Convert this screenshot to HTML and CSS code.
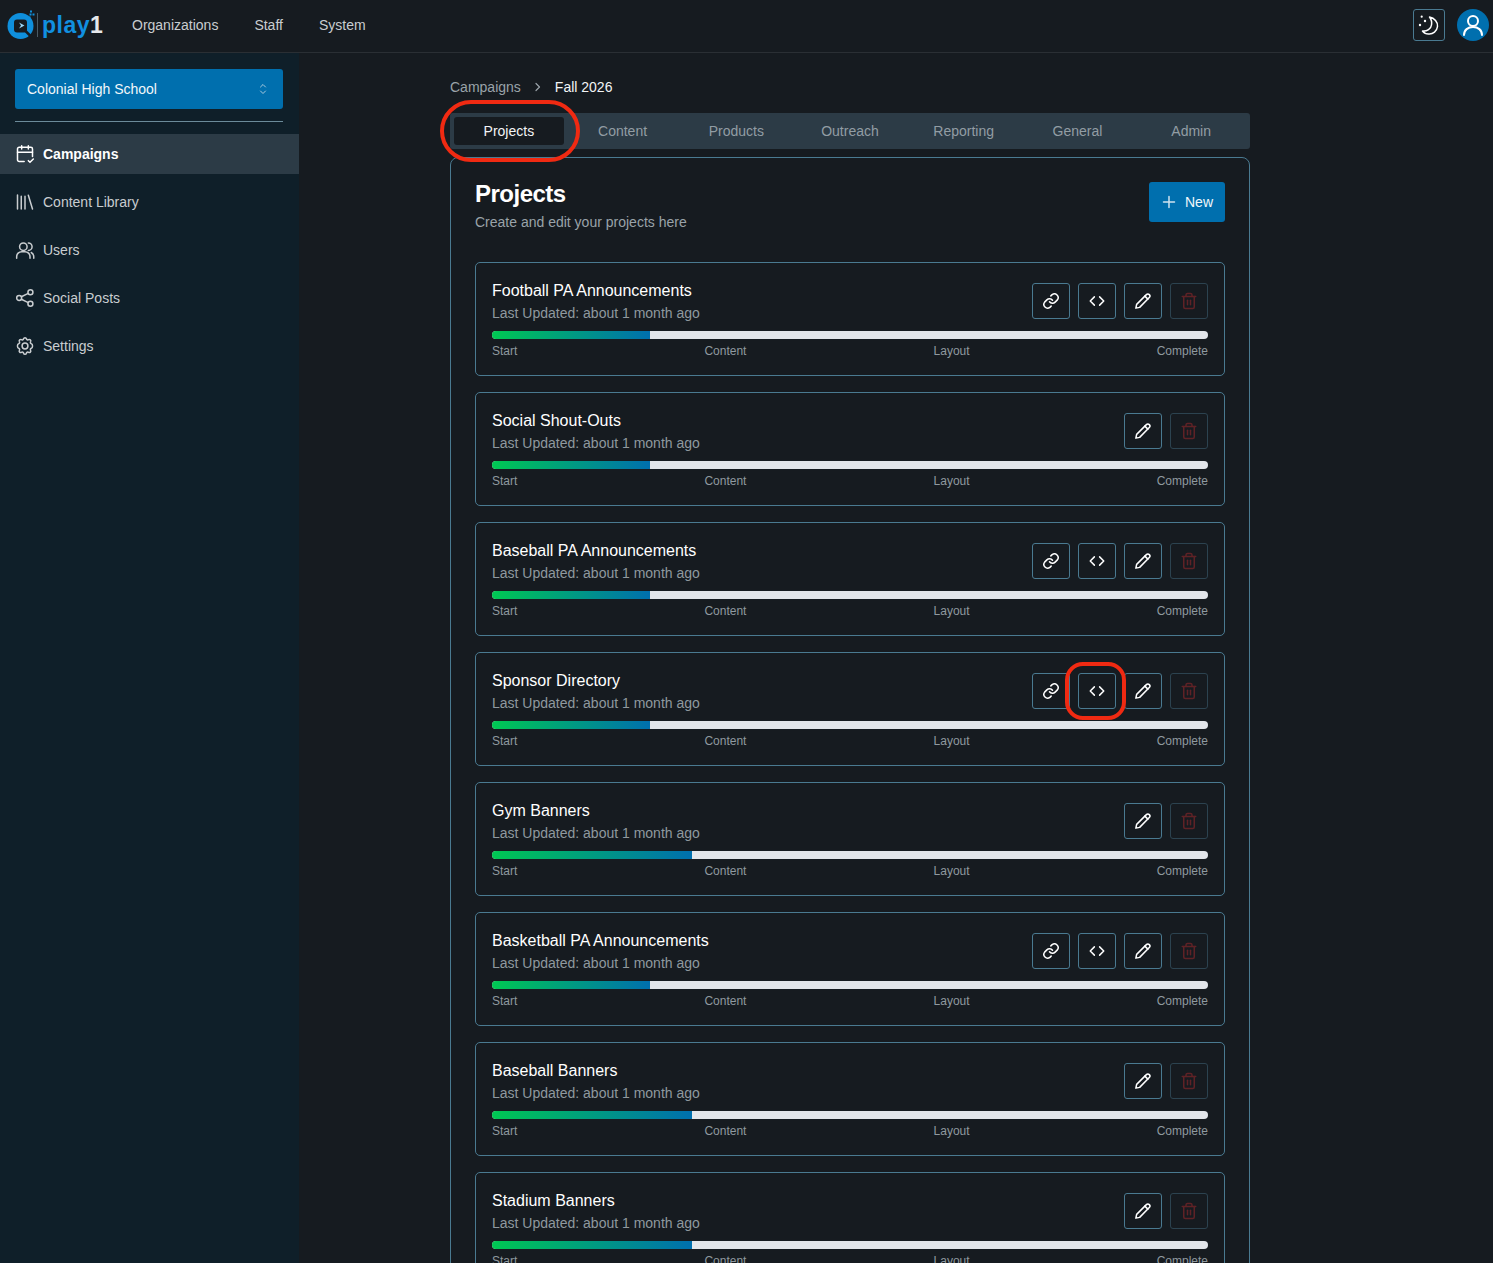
FILE: index.html
```html
<!DOCTYPE html>
<html lang="en">

<head>
    <meta charset="UTF-8">
    <meta name="viewport" content="width=device-width, initial-scale=1.0">
    <title>Fall 2026 - Projects</title>
    <link rel="stylesheet" href="styles.css">
</head>

<body>

    <svg class="sprite" width="0" height="0">
        <symbol id="i-link" viewBox="0 0 24 24"><path d="M10 13a5 5 0 0 0 7.500.5l3-3a5 5 0 0 0-7-7l-1.700 1.700"/><path d="M14 11a5 5 0 0 0-7.500-.5l-3 3a5 5 0 0 0 7 7l1.700-1.700"/></symbol>
        <symbol id="i-code" viewBox="0 0 24 24"><path d="M8.500 6.500L3 12l5.500 5.500"/><path d="M15.500 6.500L21 12l-5.500 5.500"/></symbol>
        <symbol id="i-pencil" viewBox="0 0 24 24"><path d="M16.500 3.500a2.600 2.600 0 0 1 3.900 3.900L7.500 20.500 2.500 21.500l1-5z"/><path d="M14.500 5.500l4 4"/></symbol>
        <symbol id="i-trash" viewBox="0 0 24 24"><path d="M3 6h18"/><path d="M19 6v14a2 2 0 0 1-2 2H7a2 2 0 0 1-2-2V6"/><path d="M8 6V4a2 2 0 0 1 2-2h4a2 2 0 0 1 2 2v2"/><path d="M10 11v6"/><path d="M14 11v6"/></symbol>
    </svg>

    <!-- Top bar -->
    <header class="topbar">
        <div class="logo">
            <svg class="logo-mark" width="28" height="32" viewBox="0 0 28 32">
                <circle cx="13.500" cy="18" r="13" fill="#0f8fdc"/>
                <rect x="7" y="11.500" width="13" height="13" rx="3" fill="#161b20"/>
                <path d="M18 22.500l7 7" stroke="#161b20" stroke-width="2.500"/>
                <path d="M12 14.500l5.500 3-5.500 3 2-3z" fill="#9ad6f7"/>
                <rect x="23" y="2.500" width="2" height="2" fill="#0f8fdc"/>
                <rect x="25.500" y="5.500" width="2" height="2" fill="#0f8fdc"/>
                <rect x="22.500" y="5.500" width="2" height="2" fill="#0f8fdc"/>
                <rect x="21.500" y="8.500" width="2" height="2" fill="#0f8fdc"/>
            </svg>
            <span class="logo-rule"></span>
            <span class="logo-text">play<b>1</b></span>
        </div>
        <nav class="topnav">
            <a>Organizations</a>
            <a>Staff</a>
            <a>System</a>
        </nav>
        <div class="topbar-right">
            <button class="theme-btn">
                <svg class="moon" width="22" height="22" viewBox="0 0 22 22" fill="none" stroke="#fff" stroke-width="1.500" stroke-linejoin="round">
                    <path d="M12.500 3c5 1 8.500 5 8 9.500-.5 4.500-4.500 8-9 7.500-2.500 0-4.500-1-6-3 4.500.5 8.500-2 9-6 .5-3 0-5.500-2-8z"/>
                    <circle cx="4.700" cy="2.700" r="1.100" fill="#fff" stroke="none"/>
                    <circle cx="8" cy="7" r="1.200" fill="#fff" stroke="none"/>
                    <circle cx="3" cy="11" r="1.200" fill="#fff" stroke="none"/>
                </svg>
            </button>
            <div class="avatar">
                <svg width="24" height="24" viewBox="0 0 24 24" fill="none" stroke="#fff" stroke-width="2" stroke-linecap="round">
                    <circle cx="12" cy="8" r="5"/>
                    <path d="M3 22c0-5 4-8 9-8s9 3 9 8"/>
                </svg>
            </div>
        </div>
    </header>

    <div class="layout">
        <!-- Sidebar -->
        <aside class="sidebar">
            <div class="org-select">
                <span>Colonial High School</span>
                <svg width="12" height="14" viewBox="0 0 12 14" fill="none" stroke="#a9c9dd" stroke-width="1" stroke-linecap="round" stroke-linejoin="round">
                    <path d="M3.500 5L6 2.500 8.500 5"/>
                    <path d="M3.500 9L6 11.500 8.500 9"/>
                </svg>
            </div>
            <div class="side-rule"></div>
            <ul class="side-nav">
                <li class="active">
                    <svg width="20" height="20" viewBox="0 0 24 24"><path d="M11 21H5a2 2 0 0 1-2-2V6a2 2 0 0 1 2-2h14a2 2 0 0 1 2 2v9"/><path d="M16 2v4M8 2v4M3 10h18"/><path d="M16 20l2 2 4-4"/></svg>
                    Campaigns
                </li>
                <li>
                    <svg width="20" height="20" viewBox="0 0 24 24"><path d="M3 3.500v17M7.500 5v15.500M12 5v15.500M16 4l5 16.500"/></svg>
                    Content Library
                </li>
                <li>
                    <svg width="20" height="20" viewBox="0 0 24 24"><circle cx="10" cy="8" r="4.500"/><path d="M2 22v-2a6 6 0 0 1 6-6h4a6 6 0 0 1 6 6v2"/><path d="M16 3.500a4.500 4.500 0 0 1 0 9"/><path d="M22.500 22v-2a6 6 0 0 0-3-5"/></svg>
                    Users
                </li>
                <li>
                    <svg width="20" height="20" viewBox="0 0 24 24"><circle cx="18.500" cy="5" r="3"/><circle cx="5" cy="12" r="3"/><circle cx="18.500" cy="19" r="3"/><path d="M7.600 13.500l8.300 4M15.900 6.500l-8.300 4"/></svg>
                    Social Posts
                </li>
                <li>
                    <svg width="20" height="20" viewBox="0 0 24 24"><path d="M10.300 3.300c.4-1.700 3-1.700 3.400 0a1.700 1.700 0 0 0 2.600 1.100c1.500-.9 3.300.8 2.400 2.300a1.700 1.700 0 0 0 1 2.600c1.800.4 1.800 5 0 5.400a1.700 1.700 0 0 0-1 2.600c.9 1.500-.9 3.200-2.400 2.300a1.700 1.700 0 0 0-2.600 1.100c-.4 1.700-3 1.700-3.400 0a1.700 1.700 0 0 0-2.600-1.100c-1.500.9-3.300-.8-2.400-2.300a1.700 1.700 0 0 0-1-2.600c-1.800-.4-1.800-5 0-5.400a1.700 1.700 0 0 0 1-2.600c-.9-1.500.9-3.200 2.400-2.300a1.700 1.700 0 0 0 2.600-1.100z"/><circle cx="12" cy="12" r="3.500"/></svg>
                    Settings
                </li>
            </ul>
        </aside>

        <!-- Main content -->
        <main class="main">
            <div class="breadcrumb">
                <span class="crumb">Campaigns</span>
                <svg width="14" height="14" viewBox="0 0 14 14" fill="none" stroke="#9aa3a9" stroke-width="1.200" stroke-linecap="round" stroke-linejoin="round"><path d="M5 3.500L8.500 7 5 10.500"/></svg>
                <span class="crumb-current">Fall 2026</span>
            </div>

            <div class="tabs">
                <div class="tab active">Projects</div>
                <div class="tab">Content</div>
                <div class="tab">Products</div>
                <div class="tab">Outreach</div>
                <div class="tab">Reporting</div>
                <div class="tab">General</div>
                <div class="tab">Admin</div>
            </div>

            <section class="panel">
                <div class="panel-head">
                    <div>
                        <h1>Projects</h1>
                        <p>Create and edit your projects here</p>
                    </div>
                    <button class="new-btn">
                        <svg width="16" height="16" viewBox="0 0 16 16" fill="none" stroke="#cfe3f0" stroke-width="1.500" stroke-linecap="round"><path d="M8 2.500v11M2.500 8h11"/></svg>
                        New
                    </button>
                </div>

                <div class="project-list">
                    <article class="card">
                        <div class="card-head">
                            <div>
                                <h2>Football PA Announcements</h2>
                                <p>Last Updated: about 1 month ago</p>
                            </div>
                            <div class="actions">
                                <button class="icon-btn"><svg><use href="#i-link"/></svg></button>
                                <button class="icon-btn"><svg><use href="#i-code"/></svg></button>
                                <button class="icon-btn"><svg><use href="#i-pencil"/></svg></button>
                                <button class="icon-btn danger"><svg><use href="#i-trash"/></svg></button>
                            </div>
                        </div>
                        <div class="bar"><div class="bar-fill" style="width: 22%"></div></div>
                        <div class="bar-labels"><span>Start</span><span>Content</span><span>Layout</span><span>Complete</span></div>
                    </article>

                    <article class="card">
                        <div class="card-head">
                            <div>
                                <h2>Social Shout-Outs</h2>
                                <p>Last Updated: about 1 month ago</p>
                            </div>
                            <div class="actions">
                                <button class="icon-btn"><svg><use href="#i-pencil"/></svg></button>
                                <button class="icon-btn danger"><svg><use href="#i-trash"/></svg></button>
                            </div>
                        </div>
                        <div class="bar"><div class="bar-fill" style="width: 22%"></div></div>
                        <div class="bar-labels"><span>Start</span><span>Content</span><span>Layout</span><span>Complete</span></div>
                    </article>

                    <article class="card">
                        <div class="card-head">
                            <div>
                                <h2>Baseball PA Announcements</h2>
                                <p>Last Updated: about 1 month ago</p>
                            </div>
                            <div class="actions">
                                <button class="icon-btn"><svg><use href="#i-link"/></svg></button>
                                <button class="icon-btn"><svg><use href="#i-code"/></svg></button>
                                <button class="icon-btn"><svg><use href="#i-pencil"/></svg></button>
                                <button class="icon-btn danger"><svg><use href="#i-trash"/></svg></button>
                            </div>
                        </div>
                        <div class="bar"><div class="bar-fill" style="width: 22%"></div></div>
                        <div class="bar-labels"><span>Start</span><span>Content</span><span>Layout</span><span>Complete</span></div>
                    </article>

                    <article class="card">
                        <div class="card-head">
                            <div>
                                <h2>Sponsor Directory</h2>
                                <p>Last Updated: about 1 month ago</p>
                            </div>
                            <div class="actions">
                                <button class="icon-btn"><svg><use href="#i-link"/></svg></button>
                                <button class="icon-btn"><svg><use href="#i-code"/></svg></button>
                                <button class="icon-btn"><svg><use href="#i-pencil"/></svg></button>
                                <button class="icon-btn danger"><svg><use href="#i-trash"/></svg></button>
                            </div>
                        </div>
                        <div class="bar"><div class="bar-fill" style="width: 22%"></div></div>
                        <div class="bar-labels"><span>Start</span><span>Content</span><span>Layout</span><span>Complete</span></div>
                    </article>

                    <article class="card">
                        <div class="card-head">
                            <div>
                                <h2>Gym Banners</h2>
                                <p>Last Updated: about 1 month ago</p>
                            </div>
                            <div class="actions">
                                <button class="icon-btn"><svg><use href="#i-pencil"/></svg></button>
                                <button class="icon-btn danger"><svg><use href="#i-trash"/></svg></button>
                            </div>
                        </div>
                        <div class="bar"><div class="bar-fill" style="width: 28%"></div></div>
                        <div class="bar-labels"><span>Start</span><span>Content</span><span>Layout</span><span>Complete</span></div>
                    </article>

                    <article class="card">
                        <div class="card-head">
                            <div>
                                <h2>Basketball PA Announcements</h2>
                                <p>Last Updated: about 1 month ago</p>
                            </div>
                            <div class="actions">
                                <button class="icon-btn"><svg><use href="#i-link"/></svg></button>
                                <button class="icon-btn"><svg><use href="#i-code"/></svg></button>
                                <button class="icon-btn"><svg><use href="#i-pencil"/></svg></button>
                                <button class="icon-btn danger"><svg><use href="#i-trash"/></svg></button>
                            </div>
                        </div>
                        <div class="bar"><div class="bar-fill" style="width: 22%"></div></div>
                        <div class="bar-labels"><span>Start</span><span>Content</span><span>Layout</span><span>Complete</span></div>
                    </article>

                    <article class="card">
                        <div class="card-head">
                            <div>
                                <h2>Baseball Banners</h2>
                                <p>Last Updated: about 1 month ago</p>
                            </div>
                            <div class="actions">
                                <button class="icon-btn"><svg><use href="#i-pencil"/></svg></button>
                                <button class="icon-btn danger"><svg><use href="#i-trash"/></svg></button>
                            </div>
                        </div>
                        <div class="bar"><div class="bar-fill" style="width: 28%"></div></div>
                        <div class="bar-labels"><span>Start</span><span>Content</span><span>Layout</span><span>Complete</span></div>
                    </article>

                    <article class="card">
                        <div class="card-head">
                            <div>
                                <h2>Stadium Banners</h2>
                                <p>Last Updated: about 1 month ago</p>
                            </div>
                            <div class="actions">
                                <button class="icon-btn"><svg><use href="#i-pencil"/></svg></button>
                                <button class="icon-btn danger"><svg><use href="#i-trash"/></svg></button>
                            </div>
                        </div>
                        <div class="bar"><div class="bar-fill" style="width: 28%"></div></div>
                        <div class="bar-labels"><span>Start</span><span>Content</span><span>Layout</span><span>Complete</span></div>
                    </article>
                </div>
            </section>
        </main>
    </div>

    <!-- Red annotations drawn over the screenshot -->
    <div class="callout callout-tab"></div>
    <div class="callout callout-code"></div>

</body>

</html>
```

FILE: styles.css
```css
* {
    box-sizing: border-box;
}

html,
body {
    height: 100%;
}

body {
    position: relative;
    margin: 0;
    height: 1263px;
    overflow: hidden;
    background-color: #161b20;
    color: #fff;
    font-family: "Liberation Sans", Arial, sans-serif;
    font-size: 14px;
    line-height: 20px;
}

.sprite {
    position: absolute;
}

symbol {
    fill: none;
    stroke: currentColor;
    stroke-width: 2;
    stroke-linecap: round;
    stroke-linejoin: round;
}

/* Top bar */
.topbar {
    display: flex;
    align-items: center;
    height: 53px;
    padding: 0 4px 2px 7px;
    border-bottom: 1px solid #2a2f34;
}

.logo {
    display: flex;
    align-items: center;
    width: 125px;
}

.logo-mark {
    overflow: visible;
    margin-top: -2px;
}

.logo-rule {
    width: 1px;
    height: 24px;
    margin: 0 4px 0 2px;
    background-color: #4a5a64;
}

.logo-text {
    color: #1190e0;
    font-size: 23px;
    font-weight: 700;
    letter-spacing: 0.5px;
    line-height: 24px;
}

.logo-text b {
    color: #e6e8ea;
}

.topnav {
    display: flex;
    gap: 36px;
    color: #c9cdd0;
}

.topbar-right {
    display: flex;
    align-items: center;
    gap: 12px;
    margin-left: auto;
}

.theme-btn {
    display: flex;
    align-items: center;
    justify-content: center;
    width: 32px;
    height: 32px;
    padding: 0 2px 0 0;
    background: none;
    border: 1px solid #4a7a91;
    border-radius: 3px;
}

.avatar {
    display: flex;
    align-items: center;
    justify-content: center;
    width: 32px;
    height: 32px;
    border-radius: 50%;
    background-color: #006fae;
}

/* Page layout */
.layout {
    display: flex;
    height: 1210px;
}

.sidebar {
    flex: 0 0 299px;
    padding-top: 16px;
    background-color: #0f1f29;
}

.org-select {
    display: flex;
    align-items: center;
    justify-content: space-between;
    height: 40px;
    margin: 0 16px 0 15px;
    padding: 0 14px 0 12px;
    border-radius: 3px;
    background-color: #006fae;
    color: #f2f7fa;
}

.side-rule {
    height: 1px;
    margin: 12px 16px 12px 15px;
    background-color: #6c8b9a;
}

.side-nav {
    display: flex;
    flex-direction: column;
    gap: 8px;
    margin: 0;
    padding: 0;
    list-style-type: none;
}

.side-nav li {
    display: flex;
    align-items: center;
    gap: 8px;
    height: 40px;
    padding-left: 15px;
    color: #c9cdd0;
}

.side-nav li svg {
    fill: none;
    stroke: currentColor;
    stroke-width: 1.800;
    stroke-linecap: round;
    stroke-linejoin: round;
}

.side-nav li.active {
    background-color: #2c3b46;
    color: #fff;
    font-weight: 700;
}

.main {
    flex: 1;
    padding: 24px 0 0 151px;
    overflow: hidden;
}

/* Breadcrumb and tabs */
.breadcrumb {
    display: flex;
    align-items: center;
    gap: 10px;
    height: 20px;
    margin-bottom: 16px;
}

.crumb {
    color: #9aa3a9;
}

.crumb-current {
    color: #f2f4f5;
}

.tabs {
    display: grid;
    grid-template-columns: repeat(7, 1fr);
    width: 800px;
    height: 36px;
    padding: 4px 2px;
    border-radius: 3px;
    background-color: #2c3b46;
}

.tab {
    display: flex;
    align-items: center;
    justify-content: center;
    color: #929da4;
}

.tab.active {
    margin: 0 2px;
    border-radius: 3px;
    background-color: #161b20;
    color: #f2f4f5;
}

/* Projects panel */
.panel {
    width: 800px;
    margin-top: 8px;
    padding: 24px;
    border: 1px solid #4a7a91;
    border-radius: 8px;
}

.panel-head {
    display: flex;
    align-items: flex-start;
    justify-content: space-between;
    height: 80px;
}

.panel-head h1 {
    margin: 0;
    font-size: 24px;
    font-weight: 700;
    line-height: 24px;
    letter-spacing: -0.5px;
}

.panel-head p {
    margin: 6px 0 0;
    color: #9aa3a9;
}

.new-btn {
    display: flex;
    align-items: center;
    gap: 8px;
    width: 76px;
    height: 40px;
    padding: 0 12px;
    border: none;
    border-radius: 3px;
    background-color: #006fae;
    color: #f2f7fa;
    font-family: inherit;
    font-size: 14px;
}

.project-list {
    display: flex;
    flex-direction: column;
    gap: 16px;
}

.card {
    height: 114px;
    padding: 15px 16px 0;
    border: 1px solid #4a7a91;
    border-radius: 5px;
}

.card-head {
    display: flex;
    align-items: center;
    justify-content: space-between;
    height: 45px;
}

.card-head h2 {
    margin: 1px 0 0;
    font-size: 16px;
    font-weight: 400;
    line-height: 24px;
}

.card-head p {
    margin: 0;
    color: #8f999f;
}

.actions {
    display: flex;
    gap: 8px;
}

.icon-btn {
    display: flex;
    align-items: center;
    justify-content: center;
    width: 38px;
    height: 36px;
    padding: 0;
    border: 1px solid #4a7a91;
    border-radius: 3px;
    background: none;
    color: #fff;
}

.icon-btn svg {
    width: 18px;
    height: 18px;
}

.icon-btn.danger {
    border-color: #2c4350;
    color: #5f2226;
}

.bar {
    height: 8px;
    margin-top: 8px;
    border-radius: 4px;
    background-color: #e2e5ea;
    overflow: hidden;
}

.bar-fill {
    height: 100%;
    background: linear-gradient(90deg, #00c853, #006fae);
}

.bar-labels {
    display: flex;
    justify-content: space-between;
    margin-top: 4px;
    color: #8f999f;
    font-size: 12px;
    line-height: 16px;
}

/* Annotations */
.callout {
    position: absolute;
    border: 4px solid #f02a12;
}

.callout-tab {
    left: 440px;
    top: 100px;
    width: 140px;
    height: 62px;
    border-radius: 31px;
}

.callout-code {
    left: 1065px;
    top: 662px;
    width: 61px;
    height: 58px;
    border-radius: 18px;
}
```
